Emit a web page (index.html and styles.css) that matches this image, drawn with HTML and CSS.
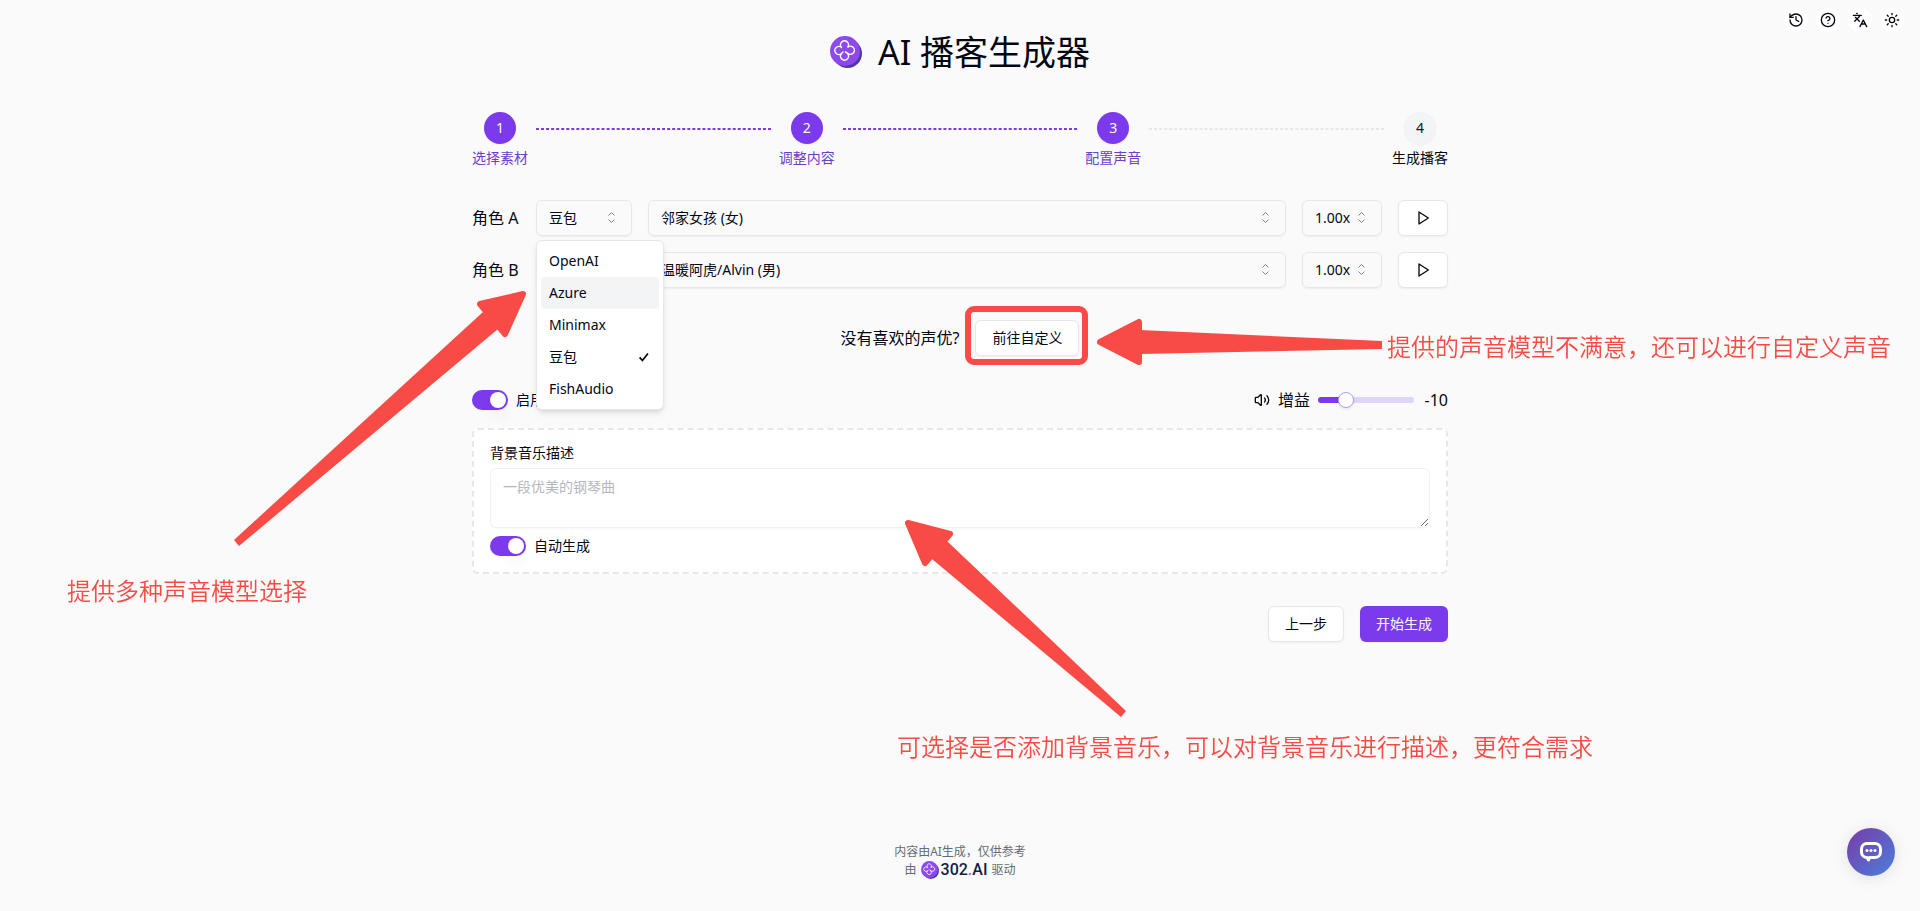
FILE: index.html
```html
<!DOCTYPE html>
<html lang="zh-CN">
<head>
<meta charset="utf-8">
<meta name="viewport" content="width=device-width, initial-scale=1">
<title>AI 播客生成器</title>
<link rel="stylesheet" href="styles.css">
</head>
<body>
<svg class="defs" aria-hidden="true">
  <defs>
    <linearGradient id="brand" x1="0" y1="0" x2="1" y2="1"><stop offset="0" stop-color="#8a4af0"/><stop offset="1" stop-color="#9046e8"/></linearGradient>
    <symbol id="logo" viewBox="0 0 32 32">
      <circle cx="17.5" cy="17.5" r="14.5" fill="#4a3aa8"/>
      <circle cx="15" cy="15" r="15" fill="url(#brand)"/>
      <path d="M11.500 11.500A4 4 0 1 1 17.500 11.500A4 4 0 1 1 18 17.500L15.500 16M17.500 17.500A4 4 0 1 1 11.500 17.500A4 4 0 1 1 11.500 11.500M11.500 17.500L13 16" fill="none" stroke="#fff" stroke-width="1.5" stroke-linecap="round"/>
    </symbol>
    <symbol id="updown" viewBox="0 0 15 15">
      <path d="M4.5 5.5 7.5 2.5 10.5 5.5M4.5 9.5 7.5 12.5 10.5 9.5" fill="none" stroke="currentColor"/>
    </symbol>
    <symbol id="play" viewBox="0 0 24 24">
      <path d="M6 3 20 12 6 21Z" fill="none" stroke="currentColor" stroke-width="2" stroke-linejoin="round"/>
    </symbol>
  </defs>
</svg>

<nav class="toolbar" aria-label="工具">
  <button type="button" aria-label="历史"><svg class="icon" viewBox="0 0 24 24"><path d="M3 12a9 9 0 1 0 9-9 9.75 9.75 0 0 0-6.74 2.74L3 8"/><path d="M3 3v5h5M12 7v5l4 2"/></svg></button>
  <button type="button" aria-label="帮助"><svg class="icon" viewBox="0 0 24 24"><circle cx="12" cy="12" r="10"/><path d="M9.09 9a3 3 0 0 1 5.83 1c0 2-3 3-3 3M12 17h.01"/></svg></button>
  <button type="button" aria-label="语言"><svg class="icon" viewBox="0 0 24 24"><path d="m5 8 6 6M4 14l6-6 2-3M2 5h12M7 2h1M22 22l-5-10-5 10M14 18h6"/></svg></button>
  <button type="button" aria-label="主题"><svg class="icon" viewBox="0 0 24 24"><circle cx="12" cy="12" r="4"/><path d="M12 2v2M12 20v2M4.93 4.93l1.41 1.41M17.66 17.66l1.41 1.41M2 12h2M20 12h2M6.34 17.66l-1.41 1.41M19.07 4.93l-1.41 1.41"/></svg></button>
</nav>

<main class="page">
  <header class="title">
    <svg class="title-logo" aria-hidden="true"><use href="#logo"/></svg>
    <h1>AI 播客生成器</h1>
  </header>

  <ol class="steps">
    <li class="step done"><span class="dot">1</span><span>选择素材</span></li>
    <li class="line done" role="presentation"></li>
    <li class="step done"><span class="dot">2</span><span>调整内容</span></li>
    <li class="line done" role="presentation"></li>
    <li class="step done"><span class="dot">3</span><span>配置声音</span></li>
    <li class="line" role="presentation"></li>
    <li class="step"><span class="dot">4</span><span>生成播客</span></li>
  </ol>

  <section class="roles">
    <div class="role">
      <label for="provider-a">角色 A</label>
      <div class="field provider">
        <select id="provider-a"><option>豆包</option></select>
        <svg class="updown" aria-hidden="true"><use href="#updown"/></svg>
        <ul class="menu" role="listbox" aria-label="声音模型">
          <li role="option">OpenAI</li>
          <li role="option" class="active">Azure</li>
          <li role="option">Minimax</li>
          <li role="option" aria-selected="true">豆包<svg class="check" viewBox="0 0 16 16" aria-hidden="true"><path d="M3 8.5 6.2 12 12.5 4"/></svg></li>
          <li role="option">FishAudio</li>
        </ul>
      </div>
      <div class="field voice">
        <select aria-label="角色 A 声音"><option>邻家女孩 (女)</option></select>
        <svg class="updown" aria-hidden="true"><use href="#updown"/></svg>
      </div>
      <div class="field speed">
        <select aria-label="角色 A 语速"><option>1.00x</option></select>
        <svg class="updown" aria-hidden="true"><use href="#updown"/></svg>
      </div>
      <button type="button" class="btn play" aria-label="试听角色 A"><svg aria-hidden="true"><use href="#play"/></svg></button>
    </div>
    <div class="role">
      <label for="provider-b">角色 B</label>
      <div class="field provider">
        <select id="provider-b"><option>豆包</option></select>
        <svg class="updown" aria-hidden="true"><use href="#updown"/></svg>
      </div>
      <div class="field voice">
        <select aria-label="角色 B 声音"><option>温暖阿虎/Alvin (男)</option></select>
        <svg class="updown" aria-hidden="true"><use href="#updown"/></svg>
      </div>
      <div class="field speed">
        <select aria-label="角色 B 语速"><option>1.00x</option></select>
        <svg class="updown" aria-hidden="true"><use href="#updown"/></svg>
      </div>
      <button type="button" class="btn play" aria-label="试听角色 B"><svg aria-hidden="true"><use href="#play"/></svg></button>
    </div>
  </section>

  <div class="custom">
    <span>没有喜欢的声优?</span>
    <button type="button" class="btn">前往自定义</button>
  </div>

  <div class="music-bar">
    <label class="toggle"><input type="checkbox" role="switch" class="switch" checked>启用背景音乐</label>
    <div class="gain">
      <svg class="icon" viewBox="0 0 24 24" aria-hidden="true"><path d="M11 4.7a.7.7 0 0 0-1.2-.5L6.4 7.6A1.4 1.4 0 0 1 5.4 8H3a1 1 0 0 0-1 1v6a1 1 0 0 0 1 1h2.4a1.4 1.4 0 0 1 1 .4l3.4 3.4a.7.7 0 0 0 1.2-.5zM16 9a5 5 0 0 1 0 6M19.4 18.4a9 9 0 0 0 0-12.7"/></svg>
      <label for="gain">增益</label>
      <input id="gain" type="range" min="-20" max="20" value="-10">
      <output for="gain">-10</output>
    </div>
  </div>

  <section class="card">
    <label for="music">背景音乐描述</label>
    <textarea id="music" placeholder="一段优美的钢琴曲"></textarea>
    <label class="toggle"><input type="checkbox" role="switch" class="switch" checked>自动生成</label>
  </section>

  <div class="actions">
    <button type="button" class="btn">上一步</button>
    <button type="button" class="btn primary">开始生成</button>
  </div>
</main>

<footer class="footer">
  <p>内容由AI生成，仅供参考</p>
  <p class="powered">由 <a href="#"><svg aria-hidden="true"><use href="#logo"/></svg><span>302<i>.</i>AI</span></a> 驱动</p>
</footer>

<button type="button" class="chat" aria-label="客服">
  <svg viewBox="0 0 24 24" aria-hidden="true"><path d="M8 3.5h8a5.5 5.5 0 0 1 5.5 5.5v3a5.5 5.5 0 0 1-5.5 5.5h-5.5l-1 2.5-1.500-2.500A5.500 5.500 0 0 1 2.500 12V9A5.500 5.500 0 0 1 8 3.500z" fill="none" stroke="#fff" stroke-width="3" stroke-linejoin="round"/><circle cx="8" cy="10.5" r="1.5" fill="#fff"/><circle cx="12" cy="10.5" r="1.5" fill="#fff"/><circle cx="16" cy="10.5" r="1.5" fill="#fff"/></svg>
</button>

<div class="notes">
  <div class="notes-canvas">
    <svg viewBox="0 0 1920 911" aria-hidden="true">
      <rect x="968" y="309" width="117" height="53" rx="6" fill="none" stroke-width="6"/>
      <path class="head" d="M523 294 480 304 505 334Z"/><path d="M483 312 234 540 239 546 498 329Z"/>
      <path class="head" d="M1100 342 1139 322 1139 362Z"/><path d="M1140 330 1382 341V349L1140 354Z"/>
      <path class="head" d="M908 523 950 534 925 563Z"/><path d="M948 542 1126 711 1121 717 932 559 930 550 940 540Z"/>
    </svg>
    <p class="note models">提供多种声音模型选择</p>
    <p class="note voices">提供的声音模型不满意，还可以进行自定义声音</p>
    <p class="note music">可选择是否添加背景音乐，可以对背景音乐进行描述，更符合需求</p>
  </div>
</div>
</body>
</html>
```
FILE: styles.css
```css
* { box-sizing: border-box; margin: 0; padding: 0; }

body {
  position: relative;
  display: flex;
  flex-direction: column;
  min-height: 100vh;
  background: #fafafa;
  color: #030712;
  font: 14px/20px "Noto Sans", "Noto Sans CJK SC", sans-serif;
}

button, select, textarea { font: inherit; color: inherit; }
ol, ul { list-style: none; }
.defs { position: absolute; width: 0; height: 0; }

.icon {
  width: 16px;
  height: 16px;
  fill: none;
  stroke: currentColor;
  stroke-width: 2;
  stroke-linecap: round;
  stroke-linejoin: round;
}

.toolbar { position: absolute; top: 8px; right: 16px; display: flex; gap: 8px; }
.toolbar button {
  display: grid;
  place-items: center;
  width: 24px;
  height: 24px;
  border: 0;
  border-radius: 50%;
  background: #fff;
}

.page {
  display: flex;
  flex-direction: column;
  gap: 32px;
  width: 100%;
  max-width: 1008px;
  margin: 0 auto;
  padding: 32px 16px;
}

.title { display: flex; justify-content: center; align-items: center; gap: 16px; margin-bottom: 8px; }
.title-logo { width: 32px; height: 32px; }
.title h1 { font-size: 34px; line-height: 40px; font-weight: 400; }

.steps { display: flex; gap: 8px; }
.step { display: flex; flex-direction: column; align-items: center; gap: 4px; white-space: nowrap; }
.step.done { color: #6d3fc9; }
.dot {
  display: grid;
  place-items: center;
  width: 32px;
  height: 32px;
  border-radius: 50%;
  background: #f3f4f6;
  color: #111827;
  box-shadow: 0 1px 2px rgba(0, 0, 0, .05);
}
.done .dot { background: #7c3aed; color: #f9fafb; }
.line { flex: 1; height: 2px; margin-top: 16px; border: 1px dashed #e5e7eb; border-width: 1px 0; }
.line.done { border-color: #7c3aed; }

.roles { display: flex; flex-direction: column; gap: 16px; }
.role { display: flex; align-items: center; gap: 16px; }
.role > label { width: 48px; font-size: 16px; line-height: 24px; white-space: nowrap; }
.field { position: relative; }
.field select {
  display: block;
  width: 100%;
  height: 36px;
  padding: 0 12px;
  border: 1px solid #e5e7eb;
  border-radius: 6px;
  background: transparent;
  box-shadow: 0 1px 2px rgba(0, 0, 0, .05);
  appearance: none;
}
.updown { position: absolute; top: 10px; right: 13px; width: 15px; height: 15px; color: #808489; pointer-events: none; }
.provider { width: 96px; }
.voice { flex: 1; }
.speed { width: 80px; }

.menu {
  position: absolute;
  z-index: 1;
  top: 40px;
  left: 0;
  width: 128px;
  padding: 4px;
  border: 1px solid #e5e7eb;
  border-radius: 6px;
  background: #fff;
  box-shadow: 0 4px 6px -1px rgba(0, 0, 0, .1), 0 2px 4px -2px rgba(0, 0, 0, .1);
}
.menu li { display: flex; justify-content: space-between; align-items: center; padding: 6px 8px; border-radius: 4px; }
.menu .active { background: #f3f4f6; }
.check { width: 14px; height: 14px; fill: none; stroke: currentColor; stroke-width: 2; }

.btn {
  height: 36px;
  padding: 0 16px;
  border: 1px solid #e5e7eb;
  border-radius: 6px;
  background: #fff;
  box-shadow: 0 1px 2px rgba(0, 0, 0, .05);
}
.play { display: grid; place-items: center; }
.play svg { width: 16px; height: 16px; }
.primary { border: 0; background: #7c3aed; color: #f9fafb; }

.custom { display: flex; justify-content: center; align-items: center; gap: 16px; font-size: 16px; }
.custom .btn { font-size: 14px; }

.music-bar { display: flex; justify-content: space-between; align-items: center; height: 24px; margin-bottom: -16px; }
.toggle { display: flex; align-items: center; gap: 8px; }
.switch {
  width: 36px;
  height: 20px;
  padding: 2px;
  border-radius: 10px;
  background: #7c3aed;
  box-shadow: 0 1px 2px rgba(0, 0, 0, .05);
  appearance: none;
}
.switch::before {
  content: "";
  display: block;
  width: 16px;
  height: 16px;
  border-radius: 50%;
  background: #fff;
  box-shadow: 0 10px 15px -3px rgba(0, 0, 0, .1);
}
.switch:checked::before { margin-left: 16px; }

.gain { display: flex; align-items: center; gap: 8px; font-size: 16px; }
.gain input {
  width: 96px;
  height: 6px;
  border-radius: 3px;
  background: linear-gradient(to right, #7c3aed 29%, #e1d4f5 29%);
  appearance: none;
}
.gain input::-webkit-slider-thumb {
  width: 16px;
  height: 16px;
  border: 1px solid #b79ee6;
  border-radius: 50%;
  background: #fff;
  box-shadow: 0 1px 3px rgba(0, 0, 0, .1);
  appearance: none;
}
.gain output { width: 26px; text-align: right; }

.card {
  display: flex;
  flex-direction: column;
  padding: 13px 16px 16px;
  border: 2px dashed #e5e7eb;
  border-radius: 6px;
  background: #fff;
}
.card textarea {
  width: 100%;
  height: 60px;
  margin: 5px 0 8px;
  padding: 8px 12px;
  border: 1px solid #f0f1f3;
  border-radius: 6px;
  background: transparent;
  box-shadow: 0 1px 2px rgba(0, 0, 0, .03);
}
.card textarea::placeholder { color: #b4b7bd; }

.actions { display: flex; justify-content: flex-end; gap: 16px; }

.footer {
  display: flex;
  flex-direction: column;
  align-items: center;
  margin-top: auto;
  padding-bottom: 31px;
  color: #666a70;
  font-size: 12px;
  line-height: 16px;
}
.powered { display: flex; align-items: center; gap: 4px; height: 20px; }
.powered a { display: flex; align-items: center; gap: 2px; color: #12203f; font: 500 16px/20px Roboto, sans-serif; text-decoration: none; }
.powered i { color: #a855f7; font-style: normal; }
.powered svg { width: 18px; height: 18px; }

.chat {
  position: fixed;
  right: 25px;
  bottom: 35px;
  display: grid;
  place-items: center;
  width: 48px;
  height: 48px;
  border: 0;
  border-radius: 50%;
  background: linear-gradient(135deg, #7a3aa8, #4a80dc);
  box-shadow: 0 2px 16px rgba(0, 0, 0, .1);
}
.chat svg { width: 24px; height: 24px; }

.notes { position: absolute; z-index: 2; inset: 0; overflow: hidden; pointer-events: none; }
.notes-canvas { position: absolute; top: 0; left: calc(50% - 960px); width: 1920px; height: 911px; }
.notes svg { display: block; width: 100%; fill: #f84b46; stroke: none; }
.notes rect { stroke: #f84b46; }
.notes .head { stroke: #f84b46; stroke-width: 6; stroke-linejoin: round; }
.note { position: absolute; color: #f84b46; font: 350 24px/32px "Noto Sans CJK SC", sans-serif; white-space: nowrap; }
.note.models { left: 67px; top: 574px; }
.note.voices { left: 1387px; top: 330px; }
.note.music { left: 897px; top: 730px; }
```
